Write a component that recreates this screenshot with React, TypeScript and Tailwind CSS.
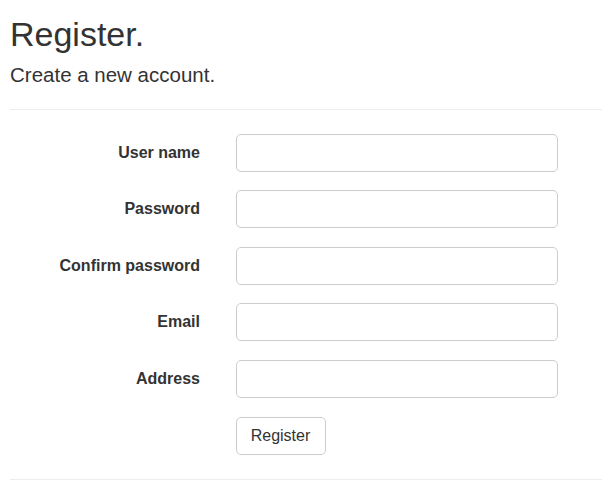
import React from "react";

const fields = ["User name", "Password", "Confirm password", "Email", "Address"];

export default function App() {
  return (
    <div
      className="min-h-[494px] w-[604px] bg-white pl-[10px] pr-[2px] text-[#333333]"
      style={{ fontFamily: '"Liberation Sans", Arial, sans-serif' }}
    >
      <h2 className="pt-[14px] text-[34px] leading-[40px] font-normal">Register.</h2>
      <h4 className="mt-[9px] text-[20.5px] leading-[24px] font-normal">Create a new account.</h4>
      <div className="mt-[22px] h-px bg-[#eeeeee]" />
      <form className="mt-[23.5px] flex flex-col gap-[18.6667px]">
        {fields.map((f) => (
          <div key={f} className="flex items-center">
            <label className="w-[190px] text-right text-[16px] leading-[20px] font-bold text-[#333333]">
              {f}
            </label>
            <input
              type={f.toLowerCase().includes("password") ? "password" : "text"}
              className="ml-[35.5px] h-[38px] w-[322.5px] rounded-[5px] border border-[#cccccc] bg-white px-3 text-[16px] outline-none"
            />
          </div>
        ))}
        <div className="flex">
          <div className="w-[190px]" />
          <button
            type="button"
            className="ml-[35.5px] h-[38px] w-[90px] rounded-[5px] border border-[#cccccc] bg-white text-[16px] leading-[20px] text-[#333333]"
          >
            Register
          </button>
        </div>
      </form>
      <div className="mt-[24px] h-px bg-[#eeeeee]" />
    </div>
  );
}
